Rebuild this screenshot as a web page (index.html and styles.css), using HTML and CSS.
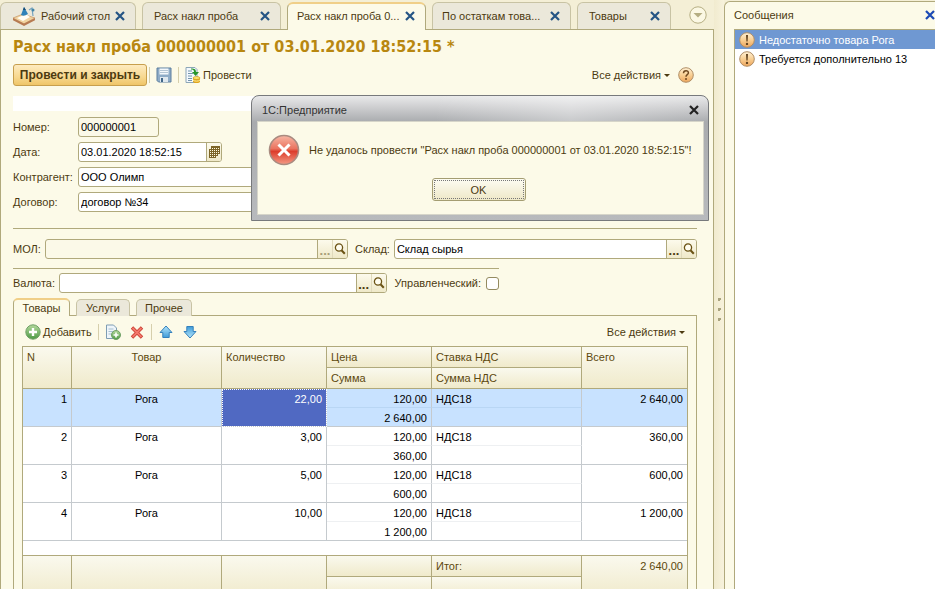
FILE: index.html
```html
<!DOCTYPE html>
<html lang="ru">
<head>
<meta charset="utf-8">
<title>Расх накл проба</title>
<link rel="stylesheet" href="styles.css">
</head>
<body>
<svg class="defs" aria-hidden="true">
  <defs>
    <linearGradient id="orange" x1="0" y1="0" x2="0" y2="1"><stop offset="0" stop-color="#fff0d4"/><stop offset=".5" stop-color="#f9cf93"/><stop offset="1" stop-color="#eda55c"/></linearGradient>
    <linearGradient id="blue" x1="0" y1="0" x2="0" y2="1"><stop offset="0" stop-color="#b5e6fb"/><stop offset="1" stop-color="#3e9bd8"/></linearGradient>
    <linearGradient id="green" x1="0" y1="0" x2="0" y2="1"><stop offset="0" stop-color="#b4d99c"/><stop offset="1" stop-color="#4d9a45"/></linearGradient>
    <linearGradient id="red" x1="0" y1="0" x2="0" y2="1"><stop offset="0" stop-color="#f7b7a5"/><stop offset=".45" stop-color="#ea7460"/><stop offset=".55" stop-color="#dc3d2c"/><stop offset="1" stop-color="#f49a85"/></linearGradient>
    <symbol id="cross" viewBox="0 0 10 10"><path d="M1 1 9 9M9 1 1 9" fill="none" stroke="currentColor" stroke-width="2.200"/></symbol>
    <symbol id="lens" viewBox="0 0 12 12"><circle cx="5" cy="4.500" r="3.600" fill="#fffdf0" stroke="#6b5315" stroke-width="1.300"/><path d="M7.500 7.200 10.800 10.800" stroke="#6b5315" stroke-width="2"/></symbol>
    <symbol id="warn" viewBox="0 0 16 16"><circle cx="8" cy="8" r="7.300" fill="url(#orange)" stroke="#b08e66"/><path d="M7 3h2l-.4 6.500H7.400z" fill="#634420"/><circle cx="8" cy="11.900" r="1.200" fill="#634420"/></symbol>
    <symbol id="arrow" viewBox="0 0 16 16"><path d="M8 2 14 8.500H11.200V13.500H4.800V8.500H2z" fill="url(#blue)" stroke="#3480bc"/></symbol>
  </defs>
</svg>
<div class="app">
  <main class="work">
    <nav class="tabs">
      <div class="tab tab-home">
        <svg class="desk" viewBox="0 0 24 20"><path d="M1 12 11 8 23 12 12 18z" fill="#f1d3a0" stroke="#c49566" stroke-width=".7"/><path d="M1 12 12 17.500 23 12V14.200L12 20 1 14.200z" fill="#b77a52"/><path d="M5 12 14 8 18 11 11 15z" fill="#fffdf5"/><path d="M9 9 12 1 16 8Q12 11 9 9z" fill="#2f82b9"/><path d="M11 4 12 1 14 4z" fill="#164c77"/><path d="M17 4 20 2 21 10" fill="none" stroke="#75a3bf" stroke-width="1.200"/><circle cx="21" cy="4" r="1.500" fill="#4285a8"/></svg>
        <a href="#">Рабочий стол</a><button class="close" aria-label="Закрыть"><svg viewBox="0 0 10 10"><use href="#cross"/></svg></button>
      </div>
      <div class="tab"><a href="#">Расх накл проба</a><button class="close" aria-label="Закрыть"><svg viewBox="0 0 10 10"><use href="#cross"/></svg></button></div>
      <div class="tab tab-long tab-active"><a href="#">Расх накл проба 0...</a><button class="close" aria-label="Закрыть"><svg viewBox="0 0 10 10"><use href="#cross"/></svg></button></div>
      <div class="tab tab-long"><a href="#">По остаткам това...</a><button class="close" aria-label="Закрыть"><svg viewBox="0 0 10 10"><use href="#cross"/></svg></button></div>
      <div class="tab tab-short"><a href="#">Товары</a><button class="close" aria-label="Закрыть"><svg viewBox="0 0 10 10"><use href="#cross"/></svg></button></div>
      <button class="more" aria-label="Список окон"><svg viewBox="0 0 18 18"><circle cx="9" cy="9" r="8.200" fill="#fbf8e4" stroke="#b5ae83"/><path d="M4.500 7h9L9 11.500z" fill="#b5ae83"/></svg></button>
    </nav>

    <div class="form">
      <h1>Расх накл проба 000000001 от 03.01.2020 18:52:15 *</h1>
      <div class="toolbar">
        <button class="primary">Провести и закрыть</button>
        <i class="sep"></i>
        <button class="tool" aria-label="Записать"><svg class="i16" viewBox="0 0 16 16"><path d="M1 1h14v14H2.500L1 13.500z" fill="#8facc7" stroke="#5d7f9f"/><path d="M3.500 1.500h9v6h-9z" fill="#f4f8fb"/><path d="M4 3.500h8M4 5.500h8" stroke="#b4c5d4"/><path d="M4 10h8v5H4z" fill="#dfe8ef"/><path d="M5 11h2v4H5z" fill="#426789"/></svg></button>
        <i class="sep"></i>
        <button class="tool"><svg class="i16" viewBox="0 0 16 16"><path d="M1 .5h9l2 2v13H1z" fill="#f4f9fd" stroke="#8ca6b8"/><path d="M3 4h4M3 6.500h5M3 9h4M3 11.500h4M3 13.500h4" stroke="#7394ad"/><path d="M6 1.500c4 0 5 1 5 3.500h3L10.500 9 7 5H9C9 3 8 2.500 6 2.500z" fill="#26952b"/><path d="M8 11v3.500c0 2 7 2 7 0V11z" fill="#e0a51b"/><ellipse cx="11.500" cy="11" rx="3.500" ry="1.500" fill="#ffe36a" stroke="#c58d12" stroke-width=".6"/><path d="M8 13c1 1.500 6 1.500 7 0" fill="none" stroke="#fff0a0"/></svg><span>Провести</span></button>
        <span class="grow"></span>
        <button class="tool all">Все действия<i class="caret"></i></button>
        <button class="tool" aria-label="Справка"><svg class="i16" viewBox="0 0 16 16"><circle cx="8" cy="8" r="7.300" fill="url(#orange)" stroke="#b08e66"/><path d="M5.500 6.300C5.500 2.800 10.600 3 10.400 6 10.300 7.600 8 7.700 8 9.700" fill="none" stroke="#70491f" stroke-width="1.500"/><circle cx="8" cy="12" r="1" fill="#70491f"/></svg></button>
      </div>
      <div class="notice"></div>

      <div class="fields">
        <label for="num">Номер:</label>
        <div class="box box-num readonly"><input id="num" value="000000001" readonly></div>
        <label for="date">Дата:</label>
        <div class="box box-date"><input id="date" value="03.01.2020 18:52:15"><button class="pick" aria-label="Календарь"><svg class="i12" viewBox="0 0 12 12"><path d="M3 0h9v8h-2v2H8v2H1V3h2z" fill="#7d6528"/><path d="M4 2h1v1H4zM6 2h1v1H6zM8 2h1v1H8zM10 2h1v1h-1zM2 4h1v1H2zM4 4h1v1H4zM6 4h1v1H6zM8 4h1v1H8zM10 4h1v1h-1zM2 6h1v1H2zM4 6h1v1H4zM6 6h1v1H6zM8 6h1v1H8zM10 6h1v1h-1zM2 8h1v1H2zM4 8h1v1H4zM6 8h1v1H6zM8 8h1v1H8zM2 10h1v1H2zM4 10h1v1H4zM6 10h1v1H6z" fill="#fffbe0"/></svg></button></div>
        <label for="agent">Контрагент:</label>
        <div class="box"><input id="agent" value="ООО Олимп"></div>
        <label for="deal">Договор:</label>
        <div class="box"><input id="deal" value="договор №34"></div>
      </div>

      <div class="line pair">
        <div class="field"><label for="mol">МОЛ:</label><div class="box readonly"><input id="mol" readonly><button class="pick dots dim" aria-label="Выбрать">...</button><button class="pick" aria-label="Открыть"><svg class="i12" viewBox="0 0 12 12"><use href="#lens"/></svg></button></div></div>
        <div class="field"><label for="store">Склад:</label><div class="box"><input id="store" value="Склад сырья"><button class="pick dots" aria-label="Выбрать">...</button><button class="pick" aria-label="Открыть"><svg class="i12" viewBox="0 0 12 12"><use href="#lens"/></svg></button></div></div>
      </div>
      <div class="line money">
        <div class="field"><label for="cur">Валюта:</label><div class="box"><input id="cur"><button class="pick dots" aria-label="Выбрать">...</button><button class="pick" aria-label="Открыть"><svg class="i12" viewBox="0 0 12 12"><use href="#lens"/></svg></button></div></div>
        <div class="check"><label for="mgmt">Управленческий:</label><input type="checkbox" id="mgmt"></div>
      </div>

      <nav class="subtabs">
        <button class="subtab subtab-active">Товары</button>
        <button class="subtab">Услуги</button>
        <button class="subtab">Прочее</button>
      </nav>
      <section class="pane">
        <div class="gridbar">
          <button class="tool"><svg class="i16" viewBox="0 0 16 16"><circle cx="8" cy="8" r="7.200" fill="url(#green)" stroke="#6fa067"/><path d="M8 4v8M4 8h8" stroke="#fff" stroke-width="2.400"/></svg><span>Добавить</span></button>
          <i class="sep"></i>
          <button class="tool" aria-label="Скопировать"><svg class="i16" viewBox="0 0 16 16"><path d="M1.500 1h7l3 3v10.500h-10z" fill="#eef5fa" stroke="#7e9db3"/><path d="M3.500 5h5M3.500 7.500h5M3.500 10h3" stroke="#a6bfd0"/><circle cx="11" cy="11" r="4.500" fill="url(#green)" stroke="#6fa067"/><path d="M11 8.500v5M8.500 11h5" stroke="#fff" stroke-width="1.600"/></svg></button>
          <button class="tool" aria-label="Удалить"><svg class="i16" viewBox="0 0 16 16"><path d="M3 3.500 13 13.500M13 3.500 3 13.500" stroke="#c93a2d" stroke-width="3.400"/><path d="M3.500 4 12.500 13M12.500 4 3.500 13" stroke="#f2786b" stroke-width="1.800"/></svg></button>
          <i class="sep"></i>
          <button class="tool" aria-label="Вверх"><svg class="i16" viewBox="0 0 16 16"><use href="#arrow"/></svg></button>
          <button class="tool" aria-label="Вниз"><svg class="i16 flip" viewBox="0 0 16 16"><use href="#arrow"/></svg></button>
          <span class="grow"></span>
          <button class="tool all">Все действия<i class="caret"></i></button>
        </div>
        <table>
          <colgroup><col class="c-n"><col><col class="c-q"><col class="c-q"><col class="c-v"><col class="c-t"></colgroup>
          <thead>
            <tr><th rowspan="2">N</th><th rowspan="2" class="mid">Товар</th><th rowspan="2">Количество</th><th>Цена</th><th>Ставка НДС</th><th rowspan="2">Всего</th></tr>
            <tr><th>Сумма</th><th>Сумма НДС</th></tr>
          </thead>
          <tbody class="picked">
            <tr><td rowspan="2" class="num">1</td><td rowspan="2" class="mid">Рога</td><td rowspan="2" class="num cursor">22,00</td><td class="num top">120,00</td><td class="top">НДС18</td><td rowspan="2" class="num">2 640,00</td></tr>
            <tr><td class="num">2 640,00</td><td></td></tr>
          </tbody>
          <tbody>
            <tr><td rowspan="2" class="num">2</td><td rowspan="2" class="mid">Рога</td><td rowspan="2" class="num">3,00</td><td class="num top">120,00</td><td class="top">НДС18</td><td rowspan="2" class="num">360,00</td></tr>
            <tr><td class="num">360,00</td><td></td></tr>
          </tbody>
          <tbody>
            <tr><td rowspan="2" class="num">3</td><td rowspan="2" class="mid">Рога</td><td rowspan="2" class="num">5,00</td><td class="num top">120,00</td><td class="top">НДС18</td><td rowspan="2" class="num">600,00</td></tr>
            <tr><td class="num">600,00</td><td></td></tr>
          </tbody>
          <tbody>
            <tr><td rowspan="2" class="num">4</td><td rowspan="2" class="mid">Рога</td><td rowspan="2" class="num">10,00</td><td class="num top">120,00</td><td class="top">НДС18</td><td rowspan="2" class="num">1 200,00</td></tr>
            <tr><td class="num">1 200,00</td><td></td></tr>
            <tr class="spare"><td colspan="6"></td></tr>
          </tbody>
          <tfoot>
            <tr><td rowspan="2"></td><td rowspan="2"></td><td rowspan="2"></td><td></td><td>Итог:</td><td rowspan="2" class="num">2 640,00</td></tr>
            <tr><td></td><td></td></tr>
          </tfoot>
        </table>
      </section>
    </div>
  </main>

  <div class="splitter"><i></i><i></i><i></i></div>

  <aside class="messages">
    <header><h2>Сообщения</h2><button class="close" aria-label="Закрыть"><svg viewBox="0 0 10 10"><use href="#cross"/></svg></button></header>
    <ul>
      <li class="chosen"><svg class="i16" viewBox="0 0 16 16"><use href="#warn"/></svg>Недостаточно товара Рога</li>
      <li><svg class="i16" viewBox="0 0 16 16"><use href="#warn"/></svg>Требуется дополнительно 13</li>
    </ul>
  </aside>
</div>

<div class="dialog" role="dialog" aria-labelledby="dlg-title">
  <header><h2 id="dlg-title">1С:Предприятие</h2><button class="close" aria-label="Закрыть"><svg viewBox="0 0 10 10"><use href="#cross"/></svg></button></header>
  <div class="dialog-body">
    <div class="dialog-text">
      <svg class="i32" viewBox="0 0 32 32"><circle cx="16" cy="16" r="14.500" fill="url(#red)" stroke="#a98b80" stroke-width="1.600"/><path d="M10.500 10.500 21.500 21.500M21.500 10.500 10.500 21.500" stroke="#fff" stroke-width="3"/></svg>
      <p>Не удалось провести "Расх накл проба 000000001 от 03.01.2020 18:52:15"!</p>
    </div>
    <button class="ok">OK</button>
  </div>
</div>
</body>
</html>
```
FILE: styles.css
```css
* { box-sizing: border-box; }

:root {
  --ink: #4c3a10;
  --edge: #b0a97c;
  --paper: #fcfae8;
  --sand: #f4efd6;
}

body {
  margin: 0;
  height: 100vh;
  overflow: hidden;
  background: var(--sand);
  color: var(--ink);
  font: 11px/14px "Liberation Sans", Arial, sans-serif;
}

button, input { font: inherit; color: inherit; margin: 0; }
button { border: 0; background: none; padding: 0; }
svg { display: block; flex: none; }
h1, h2, p, ul { margin: 0; padding: 0; font-weight: normal; font-size: inherit; }
.defs { position: absolute; width: 0; height: 0; }
.i12 { width: 12px; height: 12px; }
.i16 { width: 16px; height: 16px; }
.i32 { width: 32px; height: 32px; }
.flip { transform: rotate(180deg); }
.grow { flex: 1; }

.app { display: flex; height: 100%; }
.work { flex: 1; min-width: 0; display: flex; flex-direction: column; }

/* Window tabs */
.tabs { display: flex; gap: 6px; height: 30px; padding: 2px 7px 0 0; }
.tab {
  display: flex;
  align-items: center;
  width: 139px;
  height: 27px;
  padding: 0 10px 0 11px;
  border: 1px solid #c8c3a4;
  border-bottom: 0;
  border-radius: 6px 6px 0 0;
  background: #ebe8da;
}
.tab a { flex: 1; color: var(--ink); text-decoration: none; white-space: nowrap; }
.tab-home { width: 136px; gap: 5px; }
.tab-long { padding-left: 9px; }
.tab-short { width: 94px; }
.tab-active {
  height: 28px;
  padding-bottom: 2px;
  border-color: var(--edge);
  border-top: 2px solid #f0cf88;
  background: var(--paper);
  position: relative;
  z-index: 1;
}
.desk { width: 24px; height: 20px; }
.close { width: 10px; height: 10px; color: #245484; }
.close svg { width: 10px; height: 10px; }
.more { margin: 4px 0 0 auto; width: 18px; height: 18px; }
.more svg { width: 18px; height: 18px; }

/* Document form */
.form {
  flex: 1;
  min-height: 0;
  margin-top: -1px;
  padding: 8px 16px 0 12px;
  border: 1px solid var(--edge);
  border-bottom: 0;
  background: var(--paper);
}
h1 { font: bold 16px/18px "DejaVu Sans Condensed", "DejaVu Sans", sans-serif; color: #b88710; white-space: nowrap; }
.toolbar { display: flex; align-items: center; gap: 6px; height: 22px; margin-top: 8px; padding-right: 3px; }
.primary {
  min-width: 134px;
  height: 22px;
  margin-right: -4px;
  padding: 0 5px;
  border: 1px solid #c79f4d;
  border-radius: 3px;
  background: linear-gradient(#fdebc0, #f7d88f 60%, #efc568);
  font-weight: bold;
  font-size: 12px;
}
.tool { display: flex; align-items: center; gap: 2px; }
.sep { width: 1px; height: 16px; background: #d6cfac; }
.all { gap: 3px; }
.caret { border: 3px solid transparent; border-top-color: var(--ink); border-bottom: 0; }
.toolbar .all { margin-right: 2px; }
.notice { height: 15px; margin-top: 10px; background: #fff; }

.fields {
  display: grid;
  grid-template-columns: 65px 300px;
  grid-auto-rows: 20px;
  row-gap: 5px;
  align-items: center;
  padding: 6px 0 16px;
  border-bottom: 1px solid var(--edge);
}
.box {
  display: flex;
  flex: 1 1 auto;
  min-width: 0;
  height: 20px;
  border: 1px solid var(--edge);
  border-radius: 3px;
  background: #fff;
  overflow: hidden;
}
.box input { flex: 1; min-width: 0; padding: 0 2px; border: 0; background: none; color: #000; outline: 0; }
.box-num { width: 81px; }
.box-date { width: 144px; }
.readonly { background: #fbf9e8; }
.pick {
  display: flex;
  align-items: center;
  justify-content: center;
  width: 15px;
  border-left: 1px solid #e0dabc;
  background: linear-gradient(#fcfaec, #efe9c9);
}
input + .pick { border-left-color: var(--edge); }
.dots { align-items: flex-end; font-weight: bold; font-size: 13px; }
.dim { color: #a79d78; }

.line { display: flex; align-items: center; }
.field { display: flex; align-items: center; flex: 1 1 auto; gap: 4px; min-width: 0; }
.pair { gap: 7px; padding: 10px 0 9px; }
.money { width: 486px; padding: 4px 0 5px; gap: 8px; border-top: 1px solid var(--edge); }
.check { display: flex; align-items: center; gap: 5px; }
.check input {
  appearance: none;
  width: 13px;
  height: 13px;
  border: 1px solid #948b60;
  border-radius: 3px;
  background: #fff;
}

/* Tabular sections */
.subtabs { display: flex; gap: 6px; align-items: flex-end; height: 18px; }
.subtab {
  height: 17px;
  padding: 0 8px;
  border: 1px solid #c8c3a4;
  border-bottom: 0;
  border-radius: 5px 5px 0 0;
  background: #ebe8da;
}
.subtab { min-width: 54px; }
.subtab-active {
  min-width: 57px;
  height: 18px;
  padding-bottom: 1px;
  border-color: var(--edge);
  border-top: 2px solid #f0cf88;
  background: var(--paper);
  position: relative;
  z-index: 1;
}
.pane { margin-top: -1px; padding: 8px 8px 0; border: 1px solid var(--edge); border-bottom: 0; }
.gridbar { display: flex; align-items: center; gap: 8px; height: 16px; padding: 0 3px; }
.gridbar .sep { margin: 0 -2px; }

table { width: 100%; margin-top: 6px; table-layout: fixed; border-spacing: 0; border: 1px solid var(--edge); background: #fff; color: #000; }
.c-n { width: 49px; }
.c-q { width: 105px; }
.c-v { width: 150px; }
.c-t { width: 105px; }
th, td { height: 19px; padding: 3px 4px 1px; border: solid #c5cace; border-width: 0 1px 1px 0; text-align: left; vertical-align: top; font-weight: normal; }
tr > :last-child[rowspan], .spare td { border-right: 0; }
.mid { text-align: center; }
.num { text-align: right; }
.top { border-bottom-color: #eef0f2; }
.picked td { background: #c8e2ff; }
.picked .top { border-bottom-color: #b9d6f4; }
.picked .cursor { background: #5069c2; color: #fff; outline: 1px dotted #fff; outline-offset: -1px; }
thead th, tfoot td { height: 21px; border-color: var(--edge); background: linear-gradient(#faf9ee, #f0eacb); color: #5d490e; }
.spare td { height: 15px; padding: 0; border-bottom-color: var(--edge); }

/* Splitter and messages */
.splitter {
  width: 10px;
  display: flex;
  flex-direction: column;
  align-items: center;
  gap: 7px;
  padding-top: 298px;
  background: linear-gradient(90deg, #f1ebcf, #f7f2dc);
}
.splitter i { width: 3px; height: 3px; border: solid #aaa37e; border-width: 2px 0 0 2px; }
.messages {
  width: 211px;
  padding-left: 9px;
  margin-top: 1px;
  display: flex;
  flex-direction: column;
  border: solid var(--edge);
  border-width: 1px 0 0 1px;
  border-radius: 6px 0 0 0;
  background: var(--paper);
}
.messages header { display: flex; align-items: center; justify-content: space-between; height: 27px; padding-bottom: 2px; }
.messages .close { color: #1c49b5; }
.messages ul { flex: 1; list-style: none; border: solid var(--edge); border-width: 1px 0 0 1px; background: #fff; color: #000; }
.messages li { display: flex; align-items: center; gap: 4px; height: 19px; padding-left: 4px; white-space: nowrap; }
.messages .chosen { background: #6f98d2; color: #fff; }

/* Error dialog */
.dialog {
  position: absolute;
  left: 251px;
  top: 95px;
  z-index: 5;
  width: 458px;
  padding: 0 4px 5px 5px;
  border: 1px solid #77797c;
  border-radius: 8px 8px 0 0;
  background: linear-gradient(90deg, transparent, transparent 40%, rgba(255, 255, 255, .35) 70%, transparent) top / 100% 26px no-repeat, linear-gradient(#e9e9ea, #a9abae 26px, #b8babd);
}
.dialog header { display: flex; align-items: center; justify-content: space-between; height: 25px; padding: 3px 5px 0; color: #333; }
.dialog .close { color: #222; }
.dialog-body { padding: 12px 14px 13px 10px; background: var(--paper); border: 1px solid #d6d5c9; }
.dialog-text { display: flex; align-items: center; gap: 9px; white-space: nowrap; }
.ok {
  display: block;
  width: 94px;
  height: 23px;
  margin: 12px auto 0;
  border: 1px solid #a49d72;
  border-radius: 3px;
  background: linear-gradient(#fdfcf2, #eee8c8);
  outline: 1px dotted #777;
  outline-offset: -3px;
}
```
